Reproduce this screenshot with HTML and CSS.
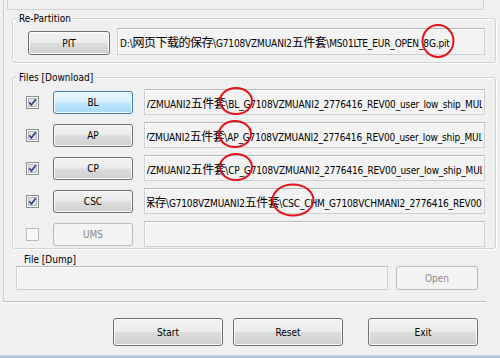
FILE: index.html
```html
<!DOCTYPE html>
<html lang="zh-CN">
<head>
    <meta charset="UTF-8">
    <title>Odin</title>
    <link rel="stylesheet" href="styles.css">
</head>
<body>
    <div class="window">
        <div class="tab-page">
            <div class="prev-box"></div>

            <!-- Re-Partition -->
            <div class="group repart">
                <span class="group-title">Re-Partition</span>
                <div class="repart-row">
                    <button class="btn pit-btn">PIT</button>
                    <div class="field pit-field"><span class="path">D:\<span class="cjk">网页下载的保存</span>\G7108VZMUANI2<span class="cjk">五件套</span>\MS01LTE_EUR_OPEN_8<span class="mark m-pit">G.p</span>it</span></div>
                </div>
            </div>

            <!-- Files [Download] -->
            <div class="group files">
                <span class="group-title">Files [Download]</span>
                <div class="file-row">
                    <svg class="chk" width="13" height="13" viewBox="0 0 13 13"><rect x="0.5" y="0.5" width="12" height="12" fill="#f6f6f6" stroke="#8f8f8f"/><rect x="2.5" y="2.5" width="8" height="8" fill="#dde2ea" stroke="#b6bcc4"/><path d="M3.3 6.3 L5.4 9 L9.8 3.3" fill="none" stroke="#2c407f" stroke-width="1.6"/></svg>
                    <button class="btn file-btn hot">BL</button>
                    <div class="field file-field"><span class="path ind3">VZMUANI2<span class="cjk">五件套</span>\<span class="mark m-std">BL_</span>G7108VZMUANI2_2776416_REV00_user_low_ship_MULTI_CERT.tar.md5</span></div>
                </div>
                <div class="file-row">
                    <svg class="chk" width="13" height="13" viewBox="0 0 13 13"><rect x="0.5" y="0.5" width="12" height="12" fill="#f6f6f6" stroke="#8f8f8f"/><rect x="2.5" y="2.5" width="8" height="8" fill="#dde2ea" stroke="#b6bcc4"/><path d="M3.3 6.3 L5.4 9 L9.8 3.3" fill="none" stroke="#2c407f" stroke-width="1.6"/></svg>
                    <button class="btn file-btn">AP</button>
                    <div class="field file-field"><span class="path ind4">VZMUANI2<span class="cjk">五件套</span>\<span class="mark m-std">AP_</span>G7108VZMUANI2_2776416_REV00_user_low_ship_MULTI_CERT.tar.md5</span></div>
                </div>
                <div class="file-row">
                    <svg class="chk" width="13" height="13" viewBox="0 0 13 13"><rect x="0.5" y="0.5" width="12" height="12" fill="#f6f6f6" stroke="#8f8f8f"/><rect x="2.5" y="2.5" width="8" height="8" fill="#dde2ea" stroke="#b6bcc4"/><path d="M3.3 6.3 L5.4 9 L9.8 3.3" fill="none" stroke="#2c407f" stroke-width="1.6"/></svg>
                    <button class="btn file-btn">CP</button>
                    <div class="field file-field"><span class="path ind3">VZMUANI2<span class="cjk">五件套</span>\<span class="mark m-std">CP_</span>G7108VZMUANI2_2776416_REV00_user_low_ship_MULTI_CERT.tar.md5</span></div>
                </div>
                <div class="file-row">
                    <svg class="chk" width="13" height="13" viewBox="0 0 13 13"><rect x="0.5" y="0.5" width="12" height="12" fill="#f6f6f6" stroke="#8f8f8f"/><rect x="2.5" y="2.5" width="8" height="8" fill="#dde2ea" stroke="#b6bcc4"/><path d="M3.3 6.3 L5.4 9 L9.8 3.3" fill="none" stroke="#2c407f" stroke-width="1.6"/></svg>
                    <button class="btn file-btn">CSC</button>
                    <div class="field file-field"><span class="path ind-csc"><span class="cjk">保存</span>\G7108VZMUANI2<span class="cjk">五件套</span>\<span class="mark m-csc">CSC_</span>CHM_G7108VCHMANI2_2776416_REV00_user_low_ship.tar.md5</span></div>
                </div>
                <div class="file-row">
                    <svg class="chk" width="13" height="13" viewBox="0 0 13 13"><rect x="0.5" y="0.5" width="12" height="12" fill="#f7f7f7" stroke="#bcbcbc"/></svg>
                    <button class="btn file-btn" disabled>UMS</button>
                    <div class="field file-field"></div>
                </div>
            </div>

            <!-- File [Dump] -->
            <div class="dump">
                <div class="dump-title">File [Dump]</div>
                <div class="dump-row">
                    <div class="field dump-field"></div>
                    <button class="btn open-btn" disabled>Open</button>
                </div>
            </div>
        </div>

        <div class="actions">
            <button class="btn act-btn start">Start</button>
            <button class="btn act-btn reset">Reset</button>
            <button class="btn act-btn exit">Exit</button>
        </div>
        <div class="frame-edge"></div>
    </div>
</body>
</html>
```

FILE: styles.css
```css
* {
    box-sizing: border-box;
}

body {
    margin: 0;
    background-color: #f0f0f0;
    font-family: "DejaVu Sans Condensed", "Liberation Sans", sans-serif;
    font-size: 10px;
    color: #000;
}

.window {
    width: 500px;
    height: 358px;
    display: flex;
    flex-direction: column;
    overflow: hidden;
}

/* Tab page that holds the groups */
.tab-page {
    flex: none;
    width: 483px;
    margin-left: 3px;
    padding-bottom: 11px;
    border-left: 1px solid #cfcfcf;
    border-bottom: 1px solid #bdbdbd;
    box-shadow: 0 1px 0 #fff;
}

.prev-box {
    width: 477px;
    height: 10px;
    margin-left: 3px;
    border: 1px solid #d3d3d3;
    border-top: none;
}

/* Group boxes */
.group {
    position: relative;
    width: 484px;
    margin-left: 8px;
    border: 1px solid #d3d3d3;
    border-radius: 3px;
    box-shadow: inset 1px 1px 0 #fff, 1px 1px 0 #fff;
}

.group-title {
    position: absolute;
    top: -7px;
    left: 4px;
    padding: 0 2px;
    line-height: 13px;
    background-color: #f0f0f0;
}

.repart {
    margin-top: 8px;
    padding: 9px 9px 7px 15px;
}

.repart-row {
    display: flex;
    align-items: flex-end;
}

.files {
    margin-top: 14px;
    padding: 11px 0 1px 13px;
    display: flex;
    flex-direction: column;
    gap: 7px;
}

.file-row {
    display: flex;
    align-items: center;
    height: 26px;
}

.chk {
    flex: none;
    margin-right: 14px;
}

/* Buttons */
.btn {
    flex: none;
    padding: 0;
    font: inherit;
    color: #000;
    border: 1px solid #707070;
    border-radius: 3px;
    background: linear-gradient(#f3f3f3 0%, #ebebeb 48%, #dcdcdc 52%, #d0d0d0 100%);
    box-shadow: inset 0 0 0 1px #fafafa;
}

.btn.hot {
    border-color: #3c7fb1;
    background: linear-gradient(#eaf6fd 0%, #d9f0fc 48%, #bee6fd 52%, #a7d9f5 100%);
    box-shadow: inset 0 0 0 1px #f4fbff;
}

.btn:disabled {
    color: #8a8a8a;
    border-color: #b8bcbf;
    background: #f4f4f4;
    box-shadow: none;
}

.pit-btn {
    width: 82px;
    height: 24px;
}

.file-btn {
    width: 80px;
    height: 23px;
    margin-right: 11px;
}

/* Read-only path fields */
.field {
    display: flex;
    align-items: center;
    padding: 0 2px;
    background-color: #f3f3f3;
    border: 1px solid #d0d0d0;
    border-top-color: #b9b9b9;
    box-shadow: inset 1px 1px 0 #fff;
}

.pit-field {
    width: 368px;
    height: 27px;
    margin-left: 7px;
}

.file-field {
    width: 341px;
    height: 26px;
}

.path {
    flex: 1;
    min-width: 0;
    white-space: nowrap;
    letter-spacing: -0.15px;
    clip-path: inset(-10px 0);
}

.ind3 { text-indent: -3px; }
.ind4 { text-indent: -4px; }
.ind-csc { text-indent: -4px; }

.cjk {
    font-family: "Noto Sans CJK SC", sans-serif;
    font-size: 12px;
    letter-spacing: -0.5px;
}

/* Red annotation rings */
.mark {
    position: relative;
}

.mark::after {
    content: "";
    position: absolute;
    left: 50%;
    top: 50%;
    border: 2px solid #e2151c;
    border-radius: 50%;
    transform: translate(-50%, -50%);
}

.m-pit::after {
    width: 29px;
    height: 30px;
    margin-top: -3px;
    margin-left: 2px;
}

.m-std::after {
    width: 30px;
    height: 24px;
    margin-top: -3px;
}

.m-csc::after {
    width: 39px;
    height: 29px;
    margin-top: -3px;
}

/* File [Dump] */
.dump {
    margin-top: 4px;
}

.dump-title {
    padding-left: 20px;
    line-height: 13px;
}

.dump-row {
    display: flex;
    gap: 8px;
    padding-left: 12px;
}

.dump-field {
    width: 372px;
    height: 24px;
}

.open-btn {
    width: 82px;
    height: 24px;
}

/* Bottom buttons */
.actions {
    flex: none;
    height: 53px;
    display: flex;
    padding-top: 16px;
}

.act-btn {
    width: 110px;
    height: 28px;
}

.start { margin-left: 113px; }
.reset { margin-left: 10px; }
.exit { margin-left: 25px; }

.frame-edge {
    flex: none;
    height: 3px;
    background: linear-gradient(#c3d5e8, #a9c2dd);
}
```
